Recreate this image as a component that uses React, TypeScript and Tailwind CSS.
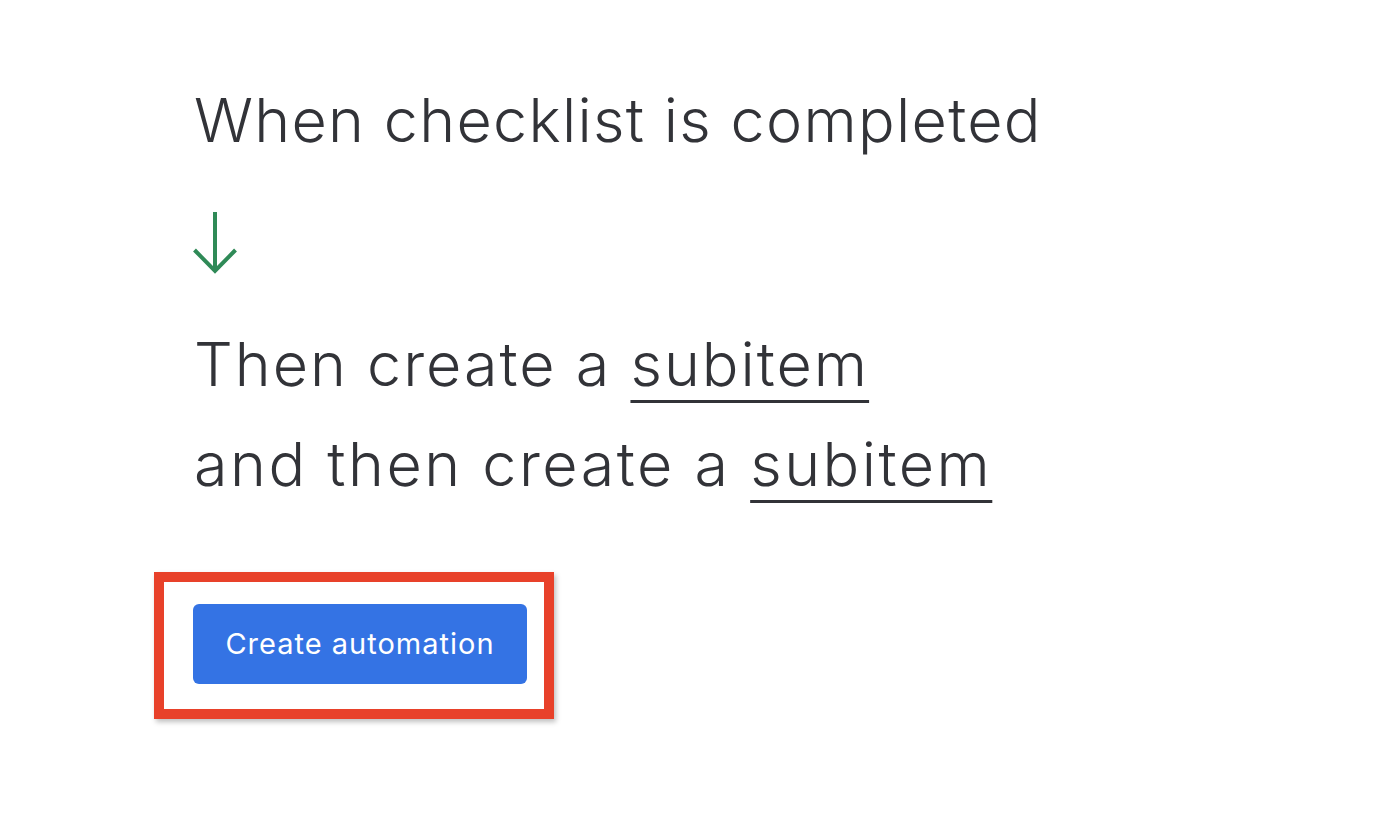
import React from "react";

function ArrowDown() {
  return (
    <svg width="46" height="62" viewBox="0 0 46 62" fill="none" className="block">
      <path d="M22 0 V59" stroke="#2f8a57" strokeWidth="4" />
      <path d="M1.5 38 L22 59 L42.5 38" stroke="#2f8a57" strokeWidth="4" />
    </svg>
  );
}

function Subitem() {
  return (
    <span className="underline decoration-[3px] underline-offset-[14px] decoration-[#323338]">
      subitem
    </span>
  );
}

export default function App() {
  return (
    <div className="min-h-screen w-full bg-white">
      <div className="pl-[194px] pt-[70px] text-[#323338] font-['Inter',sans-serif] font-light">
        <div className="text-[61px] leading-[100px] tracking-[1.3px]">When checklist is completed</div>
        <div className="mt-[42px] -ml-[1px]">
          <ArrowDown />
        </div>
        <div className="mt-[40px] text-[61px] leading-[100px] tracking-[2px]">
          Then create a <Subitem />
        </div>
        <div className="text-[61px] leading-[100px] tracking-[2.5px]">
          and then create a <Subitem />
        </div>

        {/* highlighted button */}
        <div className="mt-[58px] -ml-[40px] inline-block border-[10px] border-[#e8412a] pt-[22px] pl-[29px] pr-[17px] pb-[25px] shadow-[2px_3px_5px_rgba(0,0,0,0.25)]">
          <button className="block w-[334px] h-[80px] rounded-[6px] bg-[#3473e4] text-white text-[29px] tracking-[1px] font-normal font-['Inter',sans-serif]">
            Create automation
          </button>
        </div>
      </div>
    </div>
  );
}
